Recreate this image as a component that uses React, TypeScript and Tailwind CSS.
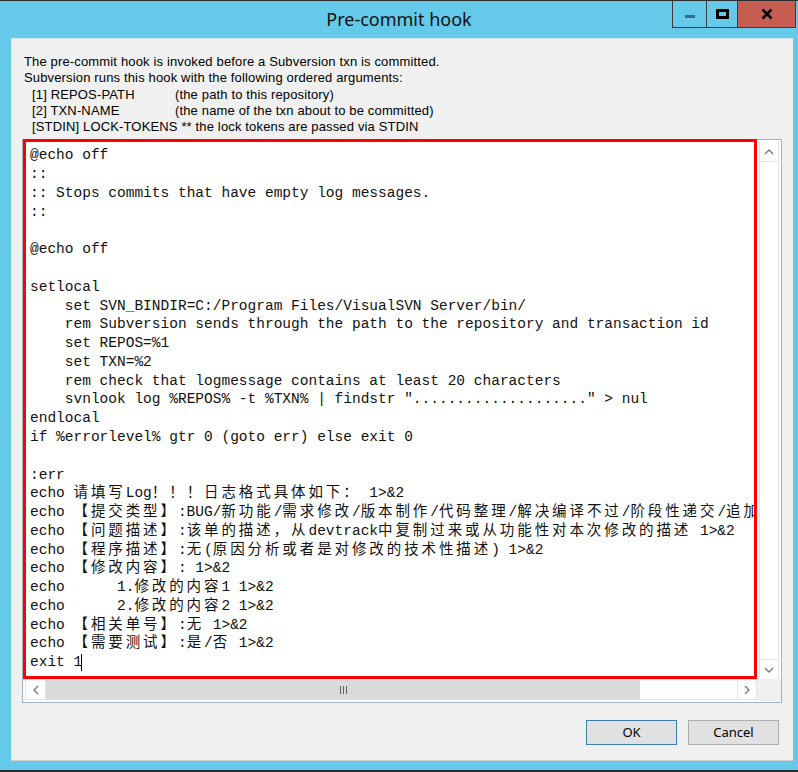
import React from 'react';

const codeLines: string[] = [
    '@echo off',
    '::',
    ':: Stops commits that have empty log messages.',
    '::',
    '',
    '@echo off',
    '',
    'setlocal',
    '    set SVN_BINDIR=C:/Program Files/VisualSVN Server/bin/',
    '    rem Subversion sends through the path to the repository and transaction id',
    '    set REPOS=%1',
    '    set TXN=%2',
    '    rem check that logmessage contains at least 20 characters',
    '    svnlook log %REPOS% -t %TXN% | findstr "...................." > nul',
    'endlocal',
    'if %errorlevel% gtr 0 (goto err) else exit 0',
    '',
    ':err',
    'echo 请填写Log！！！日志格式具体如下： 1>&2',
    'echo 【提交类型】:BUG/新功能/需求修改/版本制作/代码整理/解决编译不过/阶段性递交/追加',
    'echo 【问题描述】:该单的描述，从devtrack中复制过来或从功能性对本次修改的描述 1>&2',
    'echo 【程序描述】:无(原因分析或者是对修改的技术性描述) 1>&2',
    'echo 【修改内容】: 1>&2',
    'echo      1.修改的内容1 1>&2',
    'echo      2.修改的内容2 1>&2',
    'echo 【相关单号】:无 1>&2',
    'echo 【需要测试】:是/否 1>&2',
    'exit 1',
];

// full-width chars take two cells in the editor, so pad them out
const wide = /([\u3000-\u9fff\uff00-\uffef]+)/;

const CodeLine: React.FC<{ text: string; cursor?: boolean }> = ({ text, cursor }) => {
    const parts = text.split(wide);
    return (
        <div className="h-[18.78px] whitespace-pre">
            {parts.map((p, i) =>
                wide.test(p) ? (
                    <span key={i} className="tracking-[2.9px]">{p}</span>
                ) : (
                    <span key={i}>{p}</span>
                )
            )}
            {cursor && <span className="inline-block w-px h-[17px] bg-black align-middle -ml-[1px]" />}
            {text === '' && ' '}
        </div>
    );
};

const Chevron: React.FC<{ dir: 'up' | 'down' | 'left' | 'right' }> = ({ dir }) => {
    const pts = {
        up: '1,6 5,2 9,6',
        down: '1,2 5,6 9,2',
        left: '6,1 2,5 6,9',
        right: '2,1 6,5 2,9',
    }[dir];
    const vertical = dir === 'up' || dir === 'down';
    return (
        <svg width={vertical ? 10 : 8} height={vertical ? 8 : 10} viewBox={vertical ? '0 0 10 8' : '0 0 8 10'}>
            <polyline points={pts} fill="none" stroke="#7a7a7a" strokeWidth="1.4" />
        </svg>
    );
};

const App: React.FC = () => {
    return (
        <div className="w-[798px] h-[772px] bg-[#65c9ea] border-t border-[#2b2b2b] flex flex-col relative font-['Liberation_Sans',sans-serif]">
            {/* title bar */}
            <div className="h-[37px] flex items-center justify-center">
                <span className="font-['Noto_Sans',sans-serif] text-[18px] text-[#111] leading-none -mt-[1px]">Pre-commit hook</span>
            </div>
            <div className="absolute top-0 right-[2px] flex h-[27px] border border-t-0 border-[#3b3b3b]">
                <div className="w-[34px] flex items-center justify-center border-r border-[#3b3b3b]">
                    <div className="w-[10px] h-[3px] bg-[#2d6f87] mt-[4px]" />
                </div>
                <div className="w-[31px] flex items-center justify-center border-r border-[#3b3b3b]">
                    <div className="w-[13px] h-[10px] border-[3px] border-black -mt-[1px]" />
                </div>
                <div className="w-[57px] flex items-center justify-center bg-[#c75c50]">
                    <svg width="12" height="12" viewBox="0 0 12 12">
                        <path d="M1.5 1.5 L10.5 10.5 M10.5 1.5 L1.5 10.5" stroke="#000" strokeWidth="2.6" />
                    </svg>
                </div>
            </div>

            {/* client area */}
            <div className="ml-[11px] mr-[5px] h-[723px] bg-[#f0f0f0] border-t border-[#d6e6ef] border-b border-b-[#d0d0d0] px-[11px] flex flex-col">
                <div className="pt-[15px] pl-[2px] text-[13px] tracking-[0.15px] leading-[16.3px] text-black">
                    <div>The pre-commit hook is invoked before a Subversion txn is committed.</div>
                    <div>Subversion runs this hook with the following ordered arguments:</div>
                    <div className="pl-[8px] flex"><span className="w-[143px]">[1] REPOS-PATH</span><span>(the path to this repository)</span></div>
                    <div className="pl-[8px] flex"><span className="w-[143px]">[2] TXN-NAME</span><span>(the name of the txn about to be committed)</span></div>
                    <div className="pl-[8px]">[STDIN] LOCK-TOKENS ** the lock tokens are passed via STDIN</div>
                </div>

                {/* editor */}
                <div className="mt-[4px] h-[564px] border border-[#9fb4c9] bg-white grid grid-cols-[1fr_24px] grid-rows-[539px_22px]">
                    <div className="-mt-[1px] h-[540px] border-[3px] border-[#ff0000] overflow-hidden pl-[4px] pt-[3px] text-[14.5px] text-[#111] font-['Liberation_Mono','Noto_Sans_CJK_SC',monospace]">
                        {codeLines.map((l, i) => (
                            <CodeLine key={i} text={l} cursor={i === codeLines.length - 1} />
                        ))}
                    </div>
                    <div className="pl-[2px] pr-[2px] pt-[2px]">
                        <div className="h-full flex flex-col border-x border-[#e3e3e3]">
                            <div className="h-[20px] border-b border-[#e3e3e3] flex items-center justify-center"><Chevron dir="up" /></div>
                            <div className="flex-1" />
                            <div className="h-[20px] border-t border-[#e3e3e3] flex items-center justify-center"><Chevron dir="down" /></div>
                        </div>
                    </div>
                    <div className="flex h-[21px] pl-[2px] border-y border-[#e3e3e3]">
                        <div className="w-[21px] border-x border-[#e3e3e3] flex items-center justify-center"><Chevron dir="left" /></div>
                        <div className="w-[594px] bg-[#dadada] flex items-center justify-center gap-[2px]">
                            <div className="w-px h-[8px] bg-[#606060]" />
                            <div className="w-px h-[8px] bg-[#606060]" />
                            <div className="w-px h-[8px] bg-[#606060]" />
                        </div>
                        <div className="flex-1" />
                        <div className="w-[20px] border-x border-[#e3e3e3] flex items-center justify-center"><Chevron dir="right" /></div>
                    </div>
                    <div className="bg-[#f0f0f0]" />
                </div>

                {/* buttons */}
                <div className="mt-[17px] flex justify-end gap-[11px] pr-[3px]">
                    <button className="w-[91px] h-[25px] bg-[#e1e1e1] border border-[#3c7fb1] text-[13px] font-['Noto_Sans',sans-serif] text-black">OK</button>
                    <button className="w-[91px] h-[25px] bg-[#e1e1e1] border border-[#adadad] text-[13px] font-['Noto_Sans',sans-serif] text-black">Cancel</button>
                </div>
            </div>
            <div className="h-[9px]" />
            <div className="h-[2px] bg-[#2b2b2b]" />
        </div>
    );
};

export default App;
